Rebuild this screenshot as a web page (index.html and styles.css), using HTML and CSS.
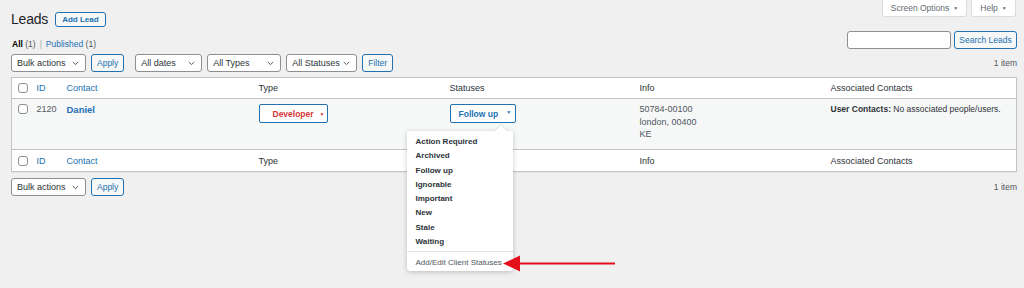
FILE: index.html
```html
<!DOCTYPE html>
<html>
  <head>
    <title>Leads</title>
    <link rel="stylesheet" href="styles.css">
  </head>
  <body>
    <div class="screen-links">
      <button class="screen-tab tab-options">Screen Options <span class="tab-caret">&#9660;</span></button>
      <button class="screen-tab tab-help">Help <span class="tab-caret">&#9660;</span></button>
    </div>
    <div class="wrap">
      <div class="title-row">
        <h1>Leads</h1>
        <a class="page-title-action">Add Lead</a>
      </div>

      <div class="sub-row">
        <ul class="subsubsub">
          <li><b>All</b> <span class="count">(1)</span></li>
          <li class="sep">|</li>
          <li><a>Published</a> <span class="count">(1)</span></li>
        </ul>
        <div class="search-box">
          <input type="text" class="search-input" />
          <button class="button">Search Leads</button>
        </div>
      </div>

      <div class="tablenav">
        <div class="actions">
          <div class="select w-bulk">Bulk actions
            <svg width="7" height="5" viewBox="0 0 7 5"><path d="M0.8 1l2.7 2.6L6.2 1" fill="none" stroke="#50575e" stroke-width="1"/></svg>
          </div>
          <button class="button">Apply</button>
        </div>
        <div class="actions">
          <div class="select w-dates">All dates
            <svg width="7" height="5" viewBox="0 0 7 5"><path d="M0.8 1l2.7 2.6L6.2 1" fill="none" stroke="#50575e" stroke-width="1"/></svg>
          </div>
          <div class="select w-types">All Types
            <svg width="7" height="5" viewBox="0 0 7 5"><path d="M0.8 1l2.7 2.6L6.2 1" fill="none" stroke="#50575e" stroke-width="1"/></svg>
          </div>
          <div class="select w-statuses">All Statuses
            <svg width="7" height="5" viewBox="0 0 7 5"><path d="M0.8 1l2.7 2.6L6.2 1" fill="none" stroke="#50575e" stroke-width="1"/></svg>
          </div>
          <button class="button">Filter</button>
        </div>
        <div class="displaying-num">1 item</div>
      </div>

      <table class="leads-table">
        <colgroup>
          <col style="width: 18px" />
          <col style="width: 30px" />
          <col style="width: 192px" />
          <col style="width: 191px" />
          <col style="width: 190px" />
          <col style="width: 191px" />
          <col />
        </colgroup>
        <thead>
          <tr>
            <th class="check-column"><span class="cb"></span></th>
            <th><a>ID</a></th>
            <th><a>Contact</a></th>
            <th>Type</th>
            <th>Statuses</th>
            <th>Info</th>
            <th>Associated Contacts</th>
          </tr>
        </thead>
        <tbody>
          <tr>
            <td class="check-column"><span class="cb"></span></td>
            <td class="muted">2120</td>
            <td><a class="row-title">Daniel</a></td>
            <td>
              <button class="pill pill-type">Developer <span class="pill-caret">&#9660;</span></button>
            </td>
            <td>
              <div class="status-picker">
                <button class="pill pill-status">Follow up <span class="pill-caret up">&#9660;</span></button>
                <div class="status-menu">
                  <ul>
                    <li>Action Required</li>
                    <li>Archived</li>
                    <li>Follow up</li>
                    <li>Ignorable</li>
                    <li>Important</li>
                    <li>New</li>
                    <li>Stale</li>
                    <li>Waiting</li>
                  </ul>
                  <div class="menu-edit">Add/Edit Client Statuses</div>
                </div>
              </div>
            </td>
            <td class="info"><span>50784-00100</span><br /><span>london, 00400</span><br /><span>KE</span></td>
            <td class="assoc"><b>User Contacts:</b> No associated people/users.</td>
          </tr>
        </tbody>
        <tfoot>
          <tr>
            <th class="check-column"><span class="cb"></span></th>
            <th><a>ID</a></th>
            <th><a>Contact</a></th>
            <th>Type</th>
            <th>Statuses</th>
            <th>Info</th>
            <th>Associated Contacts</th>
          </tr>
        </tfoot>
      </table>

      <div class="tablenav bottom">
        <div class="actions">
          <div class="select w-bulk">Bulk actions
            <svg width="7" height="5" viewBox="0 0 7 5"><path d="M0.8 1l2.7 2.6L6.2 1" fill="none" stroke="#50575e" stroke-width="1"/></svg>
          </div>
          <button class="button">Apply</button>
        </div>
        <div class="displaying-num">1 item</div>
      </div>
    </div>

    <!-- annotation arrow pointing at the edit link -->
    <svg class="callout-arrow" width="116" height="18" viewBox="0 0 116 18">
      <path d="M112 8.5H14" stroke="#e3101b" stroke-width="2.2" fill="none"/>
      <path d="M0 8.5L17 0.5V16.5Z" fill="#e3101b"/>
    </svg>
  </body>
</html>
```

FILE: styles.css
```css
* {
  margin: 0;
  padding: 0;
  box-sizing: border-box;
}

body {
  width: 1024px;
  height: 288px;
  overflow: hidden;
  background-color: #f0f0f1;
  color: #2c3338;
  font-family: "Liberation Sans", Arial, sans-serif;
  font-size: 9px;
  position: relative;
}

a {
  color: #2271b1;
  text-decoration: none;
}

button {
  font-family: inherit;
  white-space: nowrap;
}

/* screen options / help tabs */
.screen-links {
  float: right;
  display: flex;
  gap: 4px;
  margin-right: 8px;
}
.screen-tab {
  display: flex;
  align-items: center;
  justify-content: center;
  height: 17px;
  padding: 0;
  background-color: #fff;
  border: 1px solid #dcdcde;
  border-top: none;
  border-radius: 0 0 3px 3px;
  color: #646970;
  font-size: 8.5px;
}
.tab-options {
  width: 85px;
}
.tab-help {
  width: 45px;
}
.tab-caret {
  font-size: 5px;
  margin-left: 4px;
}

.wrap {
  padding: 0 7px 0 11px;
}

.title-row {
  display: flex;
  align-items: center;
  gap: 7px;
  padding-top: 10px;
  height: 28px;
}
h1 {
  font-size: 14px;
  font-weight: 400;
  line-height: 18px;
  color: #1d2327;
  letter-spacing: -0.2px;
}
.page-title-action {
  display: inline-flex;
  align-items: center;
  height: 15px;
  padding: 0 6px;
  border: 1px solid #2271b1;
  border-radius: 3px;
  background-color: #f6f7f7;
  font-size: 8px;
  font-weight: 700;
}

.sub-row {
  display: flex;
  justify-content: space-between;
  align-items: flex-end;
  margin-top: 3px;
}
.subsubsub {
  display: flex;
  list-style: none;
  gap: 4px;
  font-size: 8.5px;
  line-height: 10px;
  padding-left: 1px;
  color: #50575e;
}
.subsubsub b {
  color: #000;
}
.subsubsub .sep {
  color: #a7aaad;
}
.search-box {
  display: flex;
  gap: 3px;
}
.search-input {
  width: 104px;
  height: 18px;
  border: 1px solid #8c8f94;
  border-radius: 3px;
  background-color: #fff;
}

.button {
  height: 18px;
  padding: 0 5px;
  border: 1px solid #2271b1;
  border-radius: 3px;
  background-color: #f6f7f7;
  color: #2271b1;
  font-size: 8.5px;
}
.search-box .button {
  width: 63px;
  padding: 0;
}

.tablenav {
  display: flex;
  align-items: center;
  margin-top: 5px;
  height: 18px;
}
.tablenav .actions {
  display: flex;
  gap: 5px;
  margin-right: 11px;
}
.displaying-num {
  margin-left: auto;
  color: #50575e;
  font-size: 8.5px;
}
.tablenav.bottom {
  margin-top: 6px;
}

.select {
  display: flex;
  align-items: center;
  justify-content: space-between;
  height: 18px;
  padding: 0 6px 0 5px;
  border: 1px solid #8c8f94;
  border-radius: 3px;
  background-color: #fff;
  color: #2c3338;
  font-size: 9px;
}
.w-bulk {
  width: 75px;
}
.w-dates {
  width: 67px;
}
.w-types {
  width: 74px;
}
.w-statuses {
  width: 71px;
}

/* list table */
.leads-table {
  width: 1006px;
  margin-top: 5px;
  table-layout: fixed;
  border-collapse: collapse;
  border: 1px solid #c3c4c7;
  background-color: #fff;
  box-shadow: 0 1px 1px rgba(0, 0, 0, 0.04);
}
.leads-table th,
.leads-table td {
  padding: 0 7px;
  text-align: left;
  font-weight: 400;
  vertical-align: middle;
}
.leads-table thead th {
  height: 21px;
  border-bottom: 1px solid #c3c4c7;
}
.leads-table tfoot th {
  height: 22px;
  border-top: 1px solid #c3c4c7;
}
.leads-table .check-column {
  padding: 0 0 0 6px;
}
.leads-table tbody td {
  height: 51px;
  background-color: #f6f7f7;
  vertical-align: top;
  padding-top: 4px;
  line-height: 13px;
}
.leads-table tbody .check-column {
  padding-top: 5px;
}
.cb {
  display: block;
  width: 10px;
  height: 10px;
  border: 1px solid #8c8f94;
  border-radius: 3px;
  background-color: #fff;
}
.muted {
  color: #50575e;
}
.row-title {
  font-weight: 700;
  font-size: 9.5px;
}
.leads-table tbody .info {
  line-height: 12.5px;
  color: #50575e;
}
.leads-table tbody .assoc {
  white-space: nowrap;
  font-size: 8.5px;
}

.pill {
  display: inline-flex;
  align-items: center;
  height: 19px;
  margin-top: 1px;
  border: 1px solid #2271b1;
  border-radius: 2px;
  background-color: #fff;
  font-size: 8.5px;
  font-weight: 700;
}
.pill-type {
  width: 69px;
  padding-left: 13px;
  color: #d63638;
}
.pill-status {
  width: 66px;
  padding-left: 8px;
  color: #2271b1;
}
.pill-caret {
  font-size: 5px;
  margin-left: 6px;
}
.pill-caret.up {
  align-self: flex-start;
  margin-top: 4px;
  margin-left: 8px;
}

/* status dropdown */
.status-picker {
  position: relative;
  display: inline-block;
}
.status-menu {
  position: absolute;
  top: calc(100% + 8px);
  left: -43px;
  width: 106px;
  background-color: #fff;
  border-radius: 3px;
  box-shadow: 0 1px 5px rgba(0, 0, 0, 0.22);
  padding: 4px 0 0;
  z-index: 5;
}
.status-menu:before {
  content: "";
  position: absolute;
  top: -4px;
  right: 8px;
  width: 8px;
  height: 8px;
  background-color: #fff;
  transform: rotate(45deg);
  box-shadow: -1px -1px 2px rgba(0, 0, 0, 0.08);
}
.status-menu ul {
  list-style: none;
  position: relative;
  padding-bottom: 2px;
}
.status-menu li {
  padding-left: 9px;
  line-height: 14.3px;
  font-size: 8px;
  font-weight: 700;
  color: #2c3338;
}
.menu-edit {
  border-top: 1px solid #e2e4e7;
  padding: 4px 0 2px 9px;
  line-height: 13px;
  font-size: 8px;
  color: #50575e;
}

.callout-arrow {
  position: absolute;
  left: 503px;
  top: 255px;
  z-index: 10;
}
```
